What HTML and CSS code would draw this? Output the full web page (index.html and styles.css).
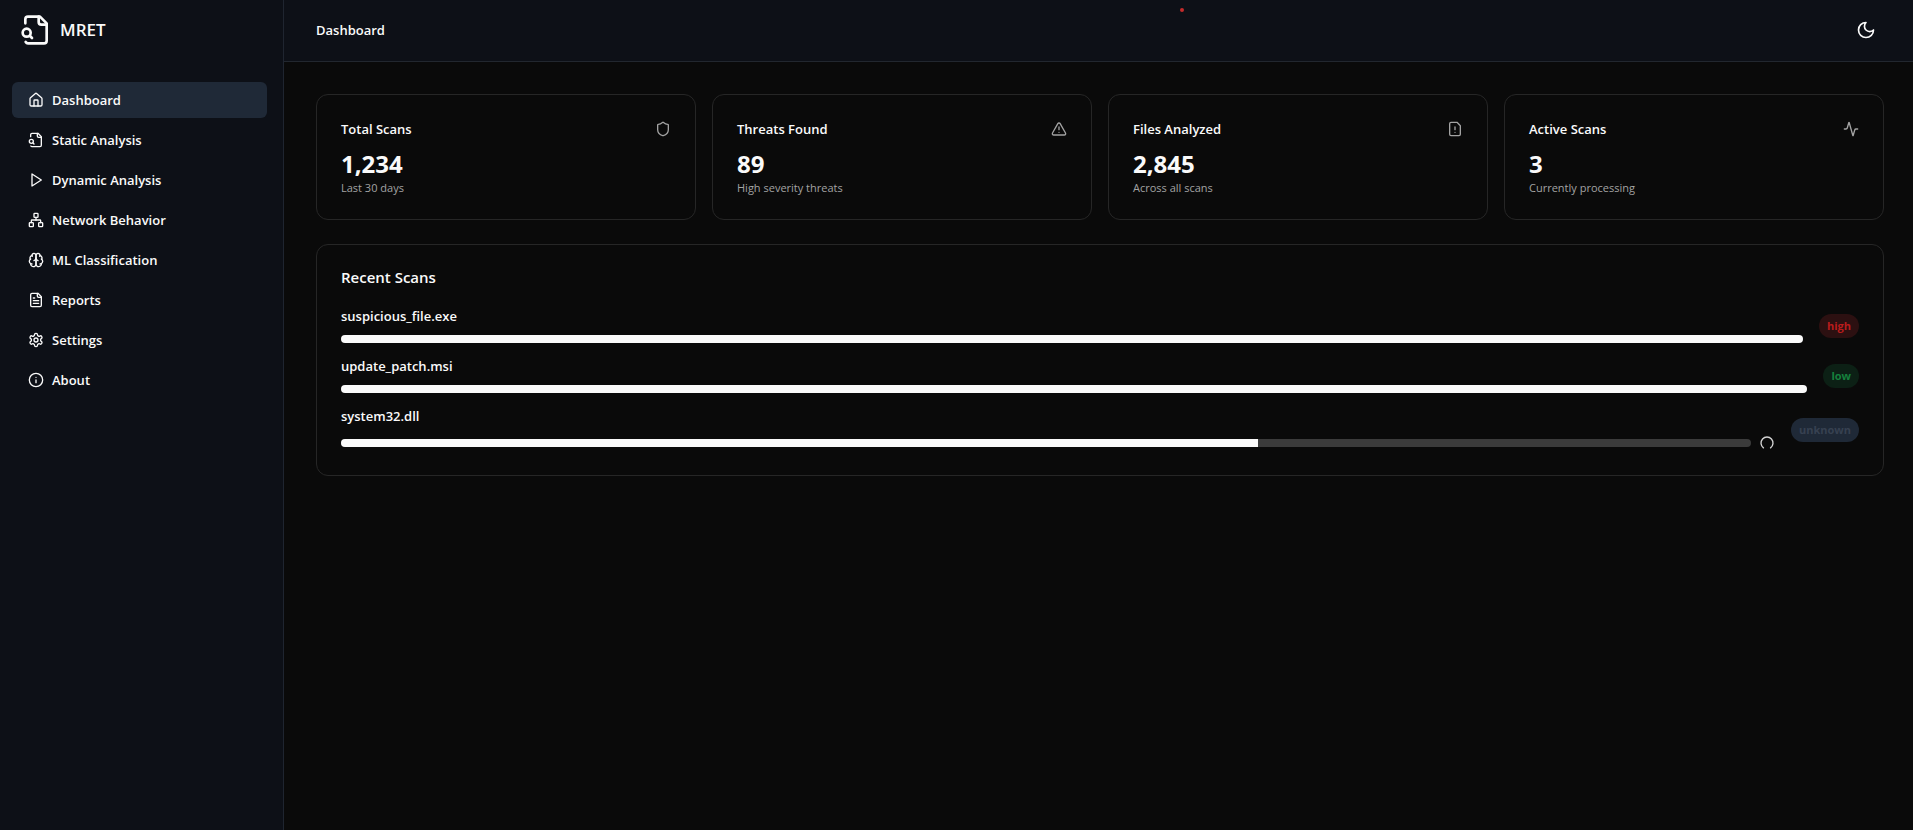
FILE: index.html
```html
<!DOCTYPE html>
<html lang="en">
<head>
<meta charset="utf-8">
<title>MRET Dashboard</title>
<link rel="stylesheet" href="styles.css">
</head>
<body>
<div class="app">
  <aside class="sidebar">
    <div class="brand">
      <svg class="icon icon-logo" viewBox="0 0 24 24" aria-hidden="true"><path d="M14 2v4a2 2 0 0 0 2 2h4"/><path d="M4.268 21a2 2 0 0 0 1.727 1H18a2 2 0 0 0 2-2V7l-5-5H6a2 2 0 0 0-2 2v3"/><path d="m9 18-1.5-1.5"/><circle cx="5" cy="14" r="3"/></svg>
      <span class="brand-name">MRET</span>
    </div>
    <nav class="nav">
      <a class="nav-link active" href="#dashboard" aria-current="page">
        <svg class="icon" viewBox="0 0 24 24" aria-hidden="true"><path d="M15 21v-8a1 1 0 0 0-1-1h-4a1 1 0 0 0-1 1v8"/><path d="M3 10a2 2 0 0 1 .709-1.528l7-5.999a2 2 0 0 1 2.582 0l7 5.999A2 2 0 0 1 21 10v9a2 2 0 0 1-2 2H5a2 2 0 0 1-2-2z"/></svg>
        Dashboard</a>
      <a class="nav-link" href="#static">
        <svg class="icon" viewBox="0 0 24 24" aria-hidden="true"><path d="M14 2v4a2 2 0 0 0 2 2h4"/><path d="M4.268 21a2 2 0 0 0 1.727 1H18a2 2 0 0 0 2-2V7l-5-5H6a2 2 0 0 0-2 2v3"/><path d="m9 18-1.5-1.5"/><circle cx="5" cy="14" r="3"/></svg>
        Static Analysis</a>
      <a class="nav-link" href="#dynamic">
        <svg class="icon" viewBox="0 0 24 24" aria-hidden="true"><polygon points="6 3 20 12 6 21 6 3"/></svg>
        Dynamic Analysis</a>
      <a class="nav-link" href="#network">
        <svg class="icon" viewBox="0 0 24 24" aria-hidden="true"><rect x="16" y="16" width="6" height="6" rx="1"/><rect x="2" y="16" width="6" height="6" rx="1"/><rect x="9" y="2" width="6" height="6" rx="1"/><path d="M5 16v-3a1 1 0 0 1 1-1h12a1 1 0 0 1 1 1v3"/><path d="M12 12V8"/></svg>
        Network Behavior</a>
      <a class="nav-link" href="#ml">
        <svg class="icon" viewBox="0 0 24 24" aria-hidden="true"><path d="M12 5a3 3 0 1 0-5.997.125 4 4 0 0 0-2.526 5.77 4 4 0 0 0 .556 6.588A4 4 0 1 0 12 18Z"/><path d="M12 5a3 3 0 1 1 5.997.125 4 4 0 0 1 2.526 5.77 4 4 0 0 1-.556 6.588A4 4 0 1 1 12 18Z"/><path d="M15 13a4.5 4.5 0 0 1-3-4 4.5 4.5 0 0 1-3 4"/><path d="M17.599 6.5a3 3 0 0 0 .399-1.375"/><path d="M6.003 5.125A3 3 0 0 0 6.401 6.5"/><path d="M3.477 10.896a4 4 0 0 1 .585-.396"/><path d="M19.938 10.5a4 4 0 0 1 .585.396"/><path d="M6 18a4 4 0 0 1-1.967-.516"/><path d="M19.967 17.484A4 4 0 0 1 18 18"/></svg>
        ML Classification</a>
      <a class="nav-link" href="#reports">
        <svg class="icon" viewBox="0 0 24 24" aria-hidden="true"><path d="M15 2H6a2 2 0 0 0-2 2v16a2 2 0 0 0 2 2h12a2 2 0 0 0 2-2V7Z"/><path d="M14 2v4a2 2 0 0 0 2 2h4"/><path d="M10 9H8"/><path d="M16 13H8"/><path d="M16 17H8"/></svg>
        Reports</a>
      <a class="nav-link" href="#settings">
        <svg class="icon" viewBox="0 0 24 24" aria-hidden="true"><path d="M12.22 2h-.44a2 2 0 0 0-2 2v.18a2 2 0 0 1-1 1.73l-.43.25a2 2 0 0 1-2 0l-.15-.08a2 2 0 0 0-2.73.73l-.22.38a2 2 0 0 0 .73 2.73l.15.1a2 2 0 0 1 1 1.72v.51a2 2 0 0 1-1 1.74l-.15.09a2 2 0 0 0-.73 2.73l.22.38a2 2 0 0 0 2.73.73l.15-.08a2 2 0 0 1 2 0l.43.25a2 2 0 0 1 1 1.73V20a2 2 0 0 0 2 2h.44a2 2 0 0 0 2-2v-.18a2 2 0 0 1 1-1.73l.43-.25a2 2 0 0 1 2 0l.15.08a2 2 0 0 0 2.73-.73l.22-.39a2 2 0 0 0-.73-2.73l-.15-.08a2 2 0 0 1-1-1.74v-.5a2 2 0 0 1 1-1.74l.15-.09a2 2 0 0 0 .73-2.73l-.22-.38a2 2 0 0 0-2.73-.73l-.15.08a2 2 0 0 1-2 0l-.43-.25a2 2 0 0 1-1-1.73V4a2 2 0 0 0-2-2z"/><circle cx="12" cy="12" r="3"/></svg>
        Settings</a>
      <a class="nav-link" href="#about">
        <svg class="icon" viewBox="0 0 24 24" aria-hidden="true"><circle cx="12" cy="12" r="10"/><path d="M12 16v-4"/><path d="M12 8h.01"/></svg>
        About</a>
    </nav>
  </aside>

  <div class="page">
    <header class="topbar">
      <h1 class="topbar-title">Dashboard</h1>
      <span class="indicator"></span>
      <button class="theme-toggle" type="button" aria-label="Toggle theme">
        <svg class="icon icon-moon" viewBox="0 0 24 24" aria-hidden="true"><path d="M12 3a6 6 0 0 0 9 9 9 9 0 1 1-9-9Z"/></svg>
      </button>
    </header>

    <main class="content">
      <section class="stats">
        <article class="card">
          <div class="card-head"><h2 class="card-title">Total Scans</h2>
            <svg class="icon icon-muted" viewBox="0 0 24 24" aria-hidden="true"><path d="M20 13c0 5-3.5 7.5-7.66 8.95a1 1 0 0 1-.67-.01C7.5 20.5 4 18 4 13V6a1 1 0 0 1 1-1c2 0 4.5-1.2 6.24-2.72a1.17 1.17 0 0 1 1.52 0C14.51 3.81 17 5 19 5a1 1 0 0 1 1 1z"/></svg></div>
          <p class="card-value">1,234</p>
          <p class="card-note">Last 30 days</p>
        </article>
        <article class="card">
          <div class="card-head"><h2 class="card-title">Threats Found</h2>
            <svg class="icon icon-muted" viewBox="0 0 24 24" aria-hidden="true"><path d="m21.73 18-8-14a2 2 0 0 0-3.48 0l-8 14A2 2 0 0 0 4 21h16a2 2 0 0 0 1.73-3"/><path d="M12 9v4"/><path d="M12 17h.01"/></svg></div>
          <p class="card-value">89</p>
          <p class="card-note">High severity threats</p>
        </article>
        <article class="card">
          <div class="card-head"><h2 class="card-title">Files Analyzed</h2>
            <svg class="icon icon-muted" viewBox="0 0 24 24" aria-hidden="true"><path d="M15 2H6a2 2 0 0 0-2 2v16a2 2 0 0 0 2 2h12a2 2 0 0 0 2-2V7Z"/><path d="M12 9v4"/><path d="M12 17h.01"/></svg></div>
          <p class="card-value">2,845</p>
          <p class="card-note">Across all scans</p>
        </article>
        <article class="card">
          <div class="card-head"><h2 class="card-title">Active Scans</h2>
            <svg class="icon icon-muted" viewBox="0 0 24 24" aria-hidden="true"><path d="M22 12h-2.48a2 2 0 0 0-1.93 1.46l-2.35 8.36a.25.25 0 0 1-.48 0L9.24 2.18a.25.25 0 0 0-.48 0l-2.35 8.36A2 2 0 0 1 4.49 12H2"/></svg></div>
          <p class="card-value">3</p>
          <p class="card-note">Currently processing</p>
        </article>
      </section>

      <section class="card recent">
        <h2 class="recent-title">Recent Scans</h2>
        <ul class="scan-list">
          <li class="scan">
            <div class="scan-main">
              <p class="scan-name">suspicious_file.exe</p>
              <div class="scan-progress"><div class="track" role="progressbar" aria-label="suspicious_file.exe" aria-valuenow="100"><div class="fill" style="width: 100%"></div></div></div>
            </div>
            <span class="badge high">high</span>
          </li>
          <li class="scan">
            <div class="scan-main">
              <p class="scan-name">update_patch.msi</p>
              <div class="scan-progress"><div class="track" role="progressbar" aria-label="update_patch.msi" aria-valuenow="100"><div class="fill" style="width: 100%"></div></div></div>
            </div>
            <span class="badge low">low</span>
          </li>
          <li class="scan">
            <div class="scan-main">
              <p class="scan-name">system32.dll</p>
              <div class="scan-progress"><div class="track" role="progressbar" aria-label="system32.dll" aria-valuenow="65"><div class="fill" style="width: 65%"></div></div>
                <svg class="icon icon-spinner" viewBox="0 0 24 24" aria-hidden="true"><path transform="rotate(126 12 12)" d="M21 12a9 9 0 1 1-6.219-8.56"/></svg></div>
            </div>
            <span class="badge unknown">unknown</span>
          </li>
        </ul>
      </section>
    </main>
  </div>
</div>
</body>
</html>
```
FILE: styles.css
```css
* {
  box-sizing: border-box;
  margin: 0;
  padding: 0;
}

body {
  background: #0a0a0a;
  color: #fafafa;
  font-family: "Open Sans", "Noto Sans", sans-serif;
  font-size: 13px;
  line-height: 20px;
}

.app {
  display: flex;
  min-height: 100vh;
}

.icon {
  width: 16px;
  height: 16px;
  flex: none;
  fill: none;
  stroke: currentColor;
  stroke-width: 2;
  stroke-linecap: round;
  stroke-linejoin: round;
}

.icon-logo {
  width: 32px;
  height: 32px;
}

.icon-moon {
  width: 20px;
  height: 20px;
}

.icon-muted {
  color: #a3a3a3;
}

.icon-spinner {
  color: #d4d4d4;
}

.sidebar {
  width: 284px;
  flex: none;
  padding: 14px 16px 14px 12px;
  background: #0d1017;
  border-right: 1px solid #1f2530;
}

.brand {
  display: flex;
  align-items: center;
  gap: 8px;
  padding-left: 8px;
  margin-bottom: 36px;
}

.brand-name {
  font-size: 17px;
  font-weight: 600;
}

.nav {
  display: flex;
  flex-direction: column;
  gap: 4px;
}

.nav-link {
  display: flex;
  align-items: center;
  gap: 8px;
  padding: 8px 16px;
  border-radius: 6px;
  color: inherit;
  font-weight: 600;
  text-decoration: none;
}

.nav-link.active {
  background: #1f2937;
}

.page {
  flex: 1;
  min-width: 0;
}

.topbar {
  position: relative;
  display: flex;
  align-items: center;
  justify-content: space-between;
  height: 62px;
  padding: 0 29px 2px 32px;
  background: #0d1017;
  border-bottom: 1px solid #22272f;
}

.topbar-title {
  font-size: 13px;
  font-weight: 600;
}

.indicator {
  position: absolute;
  top: 8px;
  left: 55%;
  width: 4px;
  height: 4px;
  border-radius: 50%;
  background: #c42b2b;
}

.theme-toggle {
  display: flex;
  padding: 8px;
  border: 0;
  background: none;
  color: inherit;
}

.content {
  display: grid;
  gap: 24px;
  padding: 32px 29px 32px 32px;
}

.stats {
  display: grid;
  grid-template-columns: repeat(4, 1fr);
  gap: 16px;
}

.card {
  padding: 24px;
  border: 1px solid #262626;
  border-radius: 12px;
}

.card-head {
  display: flex;
  align-items: center;
  justify-content: space-between;
  margin-bottom: 8px;
}

.card-title {
  font-size: 13px;
  font-weight: 600;
}

.card-value {
  font-size: 24px;
  line-height: 34px;
  font-weight: 700;
}

.card-note {
  color: #a3a3a3;
  font-size: 11px;
  line-height: 14px;
}

.recent-title {
  margin-bottom: 24px;
  font-size: 15px;
  line-height: 16px;
  font-weight: 600;
}

.scan-list {
  display: grid;
  gap: 16px;
  list-style: none;
}

.scan {
  display: flex;
  align-items: center;
  gap: 16px;
}

.scan-main {
  flex: 1;
  min-width: 0;
}

.scan-name {
  margin-bottom: 12px;
  line-height: 14px;
  font-weight: 600;
}

.scan-progress {
  display: flex;
  align-items: center;
  gap: 8px;
}

.track {
  flex: 1;
  height: 8px;
  overflow: hidden;
  border-radius: 4px;
  background: #3b3b3b;
}

.fill {
  height: 100%;
  background: #fafafa;
}

.badge {
  padding: 4px 8px;
  border-radius: 12px;
  font-size: 11px;
  line-height: 16px;
  font-weight: 700;
}

.badge.high {
  background: #2c1011;
  color: #b91c1c;
}

.badge.low {
  background: #0c2015;
  color: #15803d;
}

.badge.unknown {
  background: #1f2937;
  color: #374151;
}
```
